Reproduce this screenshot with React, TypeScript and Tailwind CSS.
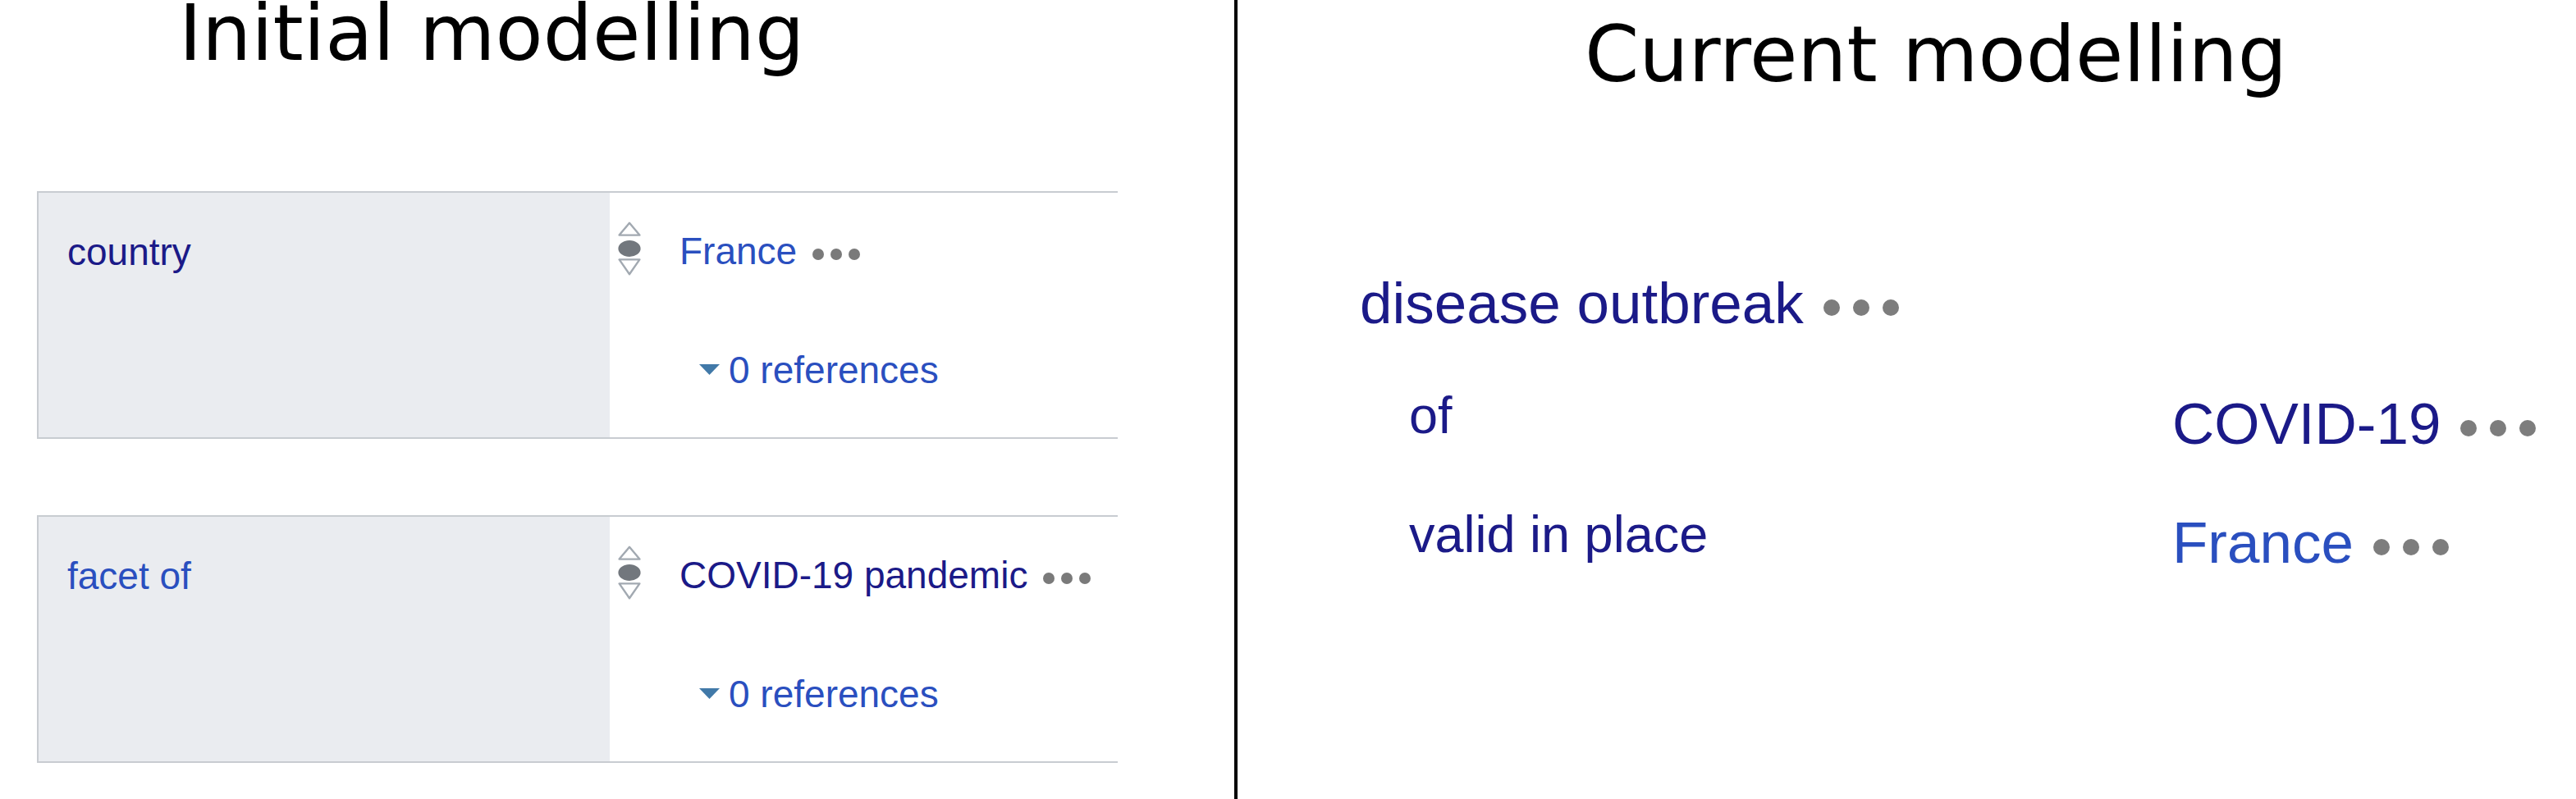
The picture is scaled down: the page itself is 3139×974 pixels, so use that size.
import React from "react";

const NAVY = "text-[#1b1a88]";
const BLUE = "text-[#2a4fbf]";

function RankIcon() {
  return (
    <svg width="28" height="66" viewBox="0 0 28 66" className="mt-[-10px] shrink-0">
      <polygon
        points="14,1.8 26.4,16.6 1.6,16.6"
        fill="none"
        stroke="#a2a9b1"
        strokeWidth="2.4"
        strokeLinejoin="round"
      />
      <ellipse cx="14" cy="33" rx="13.6" ry="10" fill="#72777d" />
      <polygon
        points="1.6,46.4 26.4,46.4 14,64.2"
        fill="none"
        stroke="#a2a9b1"
        strokeWidth="2.4"
        strokeLinejoin="round"
      />
    </svg>
  );
}

function SmallDots() {
  return (
    <span className="ml-[19px] inline-flex gap-[8px] align-middle">
      <span className="block h-[14px] w-[14px] rounded-full bg-[#7a7a7a]" />
      <span className="block h-[14px] w-[14px] rounded-full bg-[#7a7a7a]" />
      <span className="block h-[14px] w-[14px] rounded-full bg-[#7a7a7a]" />
    </span>
  );
}

function BigDots() {
  return (
    <span className="ml-[24px] inline-flex gap-[16px] align-middle">
      <span className="block h-[20px] w-[20px] rounded-full bg-[#7d7d7d]" />
      <span className="block h-[20px] w-[20px] rounded-full bg-[#7d7d7d]" />
      <span className="block h-[20px] w-[20px] rounded-full bg-[#7d7d7d]" />
    </span>
  );
}

function StatementRow({
  label,
  labelColor,
  value,
  valueColor,
}: {
  label: string;
  labelColor: string;
  value: string;
  valueColor: string;
}) {
  return (
    <div className="flex h-[302px] border-y-2 border-l-2 border-[#c8ccd1] font-['Liberation_Sans',Arial,sans-serif] text-[46px] leading-[52px]">
      <div className="w-[696px] shrink-0 bg-[#eaecf0] pl-[35px] pt-[46px]">
        <span className={labelColor}>{label}</span>
      </div>
      <div className="flex-1 bg-white pl-[10px] pt-[45px]">
        <div className="flex items-start">
          <RankIcon />
          <div className={`ml-[47px] whitespace-nowrap ${valueColor}`}>
            {value}
            <SmallDots />
          </div>
        </div>
        <div className="mt-[89px] flex items-start pl-[99px]">
          <svg width="25" height="13" viewBox="0 0 25 13" className="mt-[19px] shrink-0">
            <polygon points="0,0 25,0 12.5,13" fill="#4179a8" />
          </svg>
          <span className={`ml-[11px] whitespace-nowrap ${BLUE}`}>0 references</span>
        </div>
      </div>
    </div>
  );
}

export default function App() {
  return (
    <div className="flex h-[974px] w-[3139px] overflow-hidden bg-white">
      {/* Left panel */}
      <div className="w-[1504px] shrink-0">
        <div className="whitespace-nowrap pl-[218px] font-['DejaVu_Sans',sans-serif] text-[95px] leading-[80px] text-black">
          Initial modelling
        </div>
        <div className="ml-[45px] mt-[153px] flex w-[1317px] flex-col gap-[93px]">
          <StatementRow label="country" labelColor={NAVY} value="France" valueColor={BLUE} />
          <StatementRow
            label="facet of"
            labelColor={BLUE}
            value="COVID-19 pandemic"
            valueColor={NAVY}
          />
        </div>
      </div>

      {/* Divider */}
      <div className="w-[4px] shrink-0 bg-black" />

      {/* Right panel */}
      <div className="flex flex-1 flex-col">
        <div className="mt-[26px] whitespace-nowrap pl-[423px] font-['DejaVu_Sans',sans-serif] text-[95px] leading-[80px] text-black">
          Current modelling
        </div>
        <div className="font-['Liberation_Sans',Arial,sans-serif] text-[71px] leading-[80px]">
          <div className={`mt-[224px] whitespace-nowrap pl-[149px] ${NAVY}`}>
            disease outbreak
            <BigDots />
          </div>
          <div className="mt-[53px] flex flex-col gap-[51px] pl-[209px]">
            <div className="flex items-start">
              <div className={`w-[930px] shrink-0 pt-[3px] text-[63px] ${NAVY}`}>of</div>
              <div className={`mt-[14px] whitespace-nowrap ${NAVY}`}>
                COVID-19
                <BigDots />
              </div>
            </div>
            <div className="flex items-start">
              <div className={`w-[930px] shrink-0 pt-[3px] text-[63px] ${NAVY}`}>
                valid in place
              </div>
              <div className={`mt-[14px] whitespace-nowrap ${BLUE}`}>
                France
                <BigDots />
              </div>
            </div>
          </div>
        </div>
      </div>
    </div>
  );
}
